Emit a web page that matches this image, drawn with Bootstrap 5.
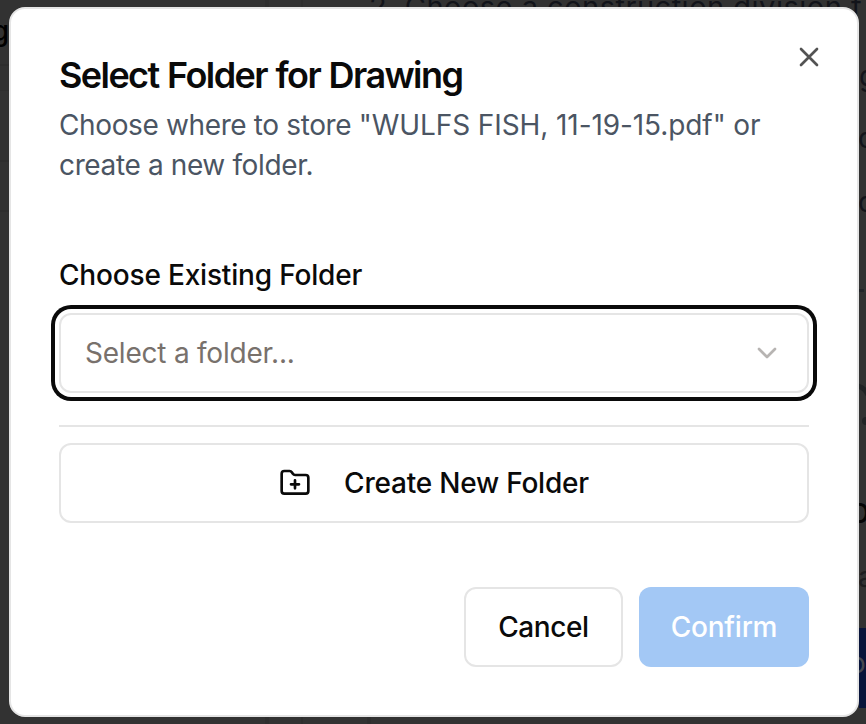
<!DOCTYPE html>
<html lang="en">
<head>
<meta charset="utf-8">
<meta name="viewport" content="width=device-width, initial-scale=1">
<title>Select Folder for Drawing</title>
<link href="https://cdn.jsdelivr.net/npm/bootstrap@5.3.0/dist/css/bootstrap.min.css" rel="stylesheet">
<style>
  body { width: 866px; height: 724px; background: #323232; font-family: Inter, sans-serif; font-size: 28px; line-height: 40px; color: #0a0a0a; }
  /* dimmed page behind the dialog */
  .scene span, .scene i, .scene svg { position: absolute; white-space: nowrap; }
  .scene span { color: #12141a; line-height: 40px; }
  .scene i { background: #2e2e2e; }
  .dialog { width: 850px; height: 710px; margin: 7px 0 0 9px; padding: 48px; border: 2px solid #e5e5e5; border-radius: 16px; background: #fff; }
  .dialog-title { font-size: 36px; line-height: 36px; font-weight: 600; letter-spacing: -1.58px; word-spacing: 1px; margin: 0 0 12px; }
  .dialog-desc { color: #4b5563; margin-bottom: 70px; letter-spacing: -.09px; }
  .snug { letter-spacing: -.37px; }
  .dismiss { top: 32px; right: 32px; width: 32px; height: 32px; line-height: 0; color: #535353; }
  .field-label { font-weight: 500; margin-bottom: 18px; letter-spacing: -.18px; }
  .outlined { height: 80px; border: 2px solid #e5e5e5; border-radius: 12px; background: #fff; }
  .picker { padding: 0 24px; color: #78716c; letter-spacing: -.22px; box-shadow: 0 0 0 4px #fff, 0 0 0 8px #0a0a0a; }
  .rule { flex: none; height: 2px; background: #e5e5e5; margin: 32px 0 16px; }
  .action { font-size: 28px; font-weight: 500; line-height: 40px; padding: 0; color: #0a0a0a; letter-spacing: -.22px; }
  .create { gap: 33px; }
  .footer-row { gap: 16px; margin-top: 64px; }
  .cancel { width: 159px; letter-spacing: -.4px; }
  .confirm, .confirm:disabled { width: 170px; height: 80px; border: 0; border-radius: 12px; background: #a3c8f5; color: #fff; opacity: 1; }
</style>
<script src="https://cdn.jsdelivr.net/npm/bootstrap@5.3.0/dist/js/bootstrap.bundle.min.js"></script>
</head>
<body class="position-relative overflow-hidden">
<div class="scene position-absolute top-0 start-0 w-100 h-100 overflow-hidden" aria-hidden="true">
  <i style="left:0;top:64px;width:10px;height:2px"></i>
  <i style="left:0;top:90px;width:10px;height:1px"></i>
  <i style="left:0;top:160px;width:10px;height:2px"></i>
  <i style="left:0;top:210px;width:10px;height:2px"></i>
  <i style="left:265px;top:0;width:4px;height:724px"></i>
  <i style="left:301px;top:0;width:2px;height:724px"></i>
  <i style="left:367px;top:717px;width:4px;height:7px"></i>
  <span style="right:857px;top:11px;color:#000;font-weight:500">g</span>
  <span style="left:369px;top:-13px;font-size:29px;letter-spacing:.5px">2. Choose a construction division f</span>
  <span style="left:859px;top:56px">g</span>
  <span style="left:858px;top:118px">d</span>
  <span style="left:858px;top:182px">d</span>
  <span style="left:848px;top:490px;font-size:36px;color:#050505">p</span>
  <span style="left:858px;top:557px;color:#1c1d1f">a</span>
  <i style="left:858px;top:289px;width:6px;height:3px;background:#222529"></i>
  <svg style="left:859px;top:380px" width="7" height="50" viewBox="0 0 7 50" fill="none" stroke="#212325" stroke-width="5"><path d="M-2 6Q5 7 9 15"/><circle cx="7" cy="41" r="4" fill="#212325" stroke="none"/></svg>
  <i style="left:859px;top:628px;width:7px;height:80px;background:#08143a"></i>
  <span style="left:849px;top:643px;color:#454850">o</span>
</div>
<main class="dialog position-relative d-flex flex-column" role="dialog" aria-labelledby="dialog-title">
  <button type="button" class="dismiss btn p-0 border-0 position-absolute" aria-label="Close">
    <svg width="32" height="32" viewBox="0 0 24 24" fill="none" stroke="currentColor" stroke-width="2" stroke-linecap="round" stroke-linejoin="round"><path d="M18 6 6 18M6 6l12 12"/></svg>
  </button>
  <h1 class="dialog-title" id="dialog-title">Select Folder for Drawing</h1>
  <p class="dialog-desc"><span class="snug">Choose where to store </span>"WULFS FISH, 11-19-15.pdf" or<br><span class="snug">create a new folder.</span></p>
  <div class="field-label">Choose Existing Folder</div>
  <div class="outlined picker d-flex align-items-center justify-content-between" role="combobox" tabindex="0" aria-expanded="false">
    <span>Select a folder...</span>
    <svg width="32" height="32" viewBox="0 0 24 24" fill="none" stroke="#b7b4b2" stroke-width="2" stroke-linecap="round" stroke-linejoin="round"><path d="m6 9 6 6 6-6"/></svg>
  </div>
  <div class="rule"></div>
  <button type="button" class="btn action outlined create d-flex align-items-center justify-content-center">
    <svg width="32" height="32" viewBox="0 0 24 24" fill="none" stroke="currentColor" stroke-width="2" stroke-linecap="round" stroke-linejoin="round"><path d="M12 10v6M9 13h6M20 20a2 2 0 0 0 2-2V8a2 2 0 0 0-2-2h-7.900a2 2 0 0 1-1.690-.9L9.600 3.900A2 2 0 0 0 7.930 3H4a2 2 0 0 0-2 2v13a2 2 0 0 0 2 2Z"/></svg>
    <span>Create New Folder</span>
  </button>
  <div class="footer-row d-flex justify-content-end">
    <button type="button" class="btn action outlined cancel">Cancel</button>
    <button type="button" class="btn action confirm" disabled>Confirm</button>
  </div>
</main>
</body>
</html>
